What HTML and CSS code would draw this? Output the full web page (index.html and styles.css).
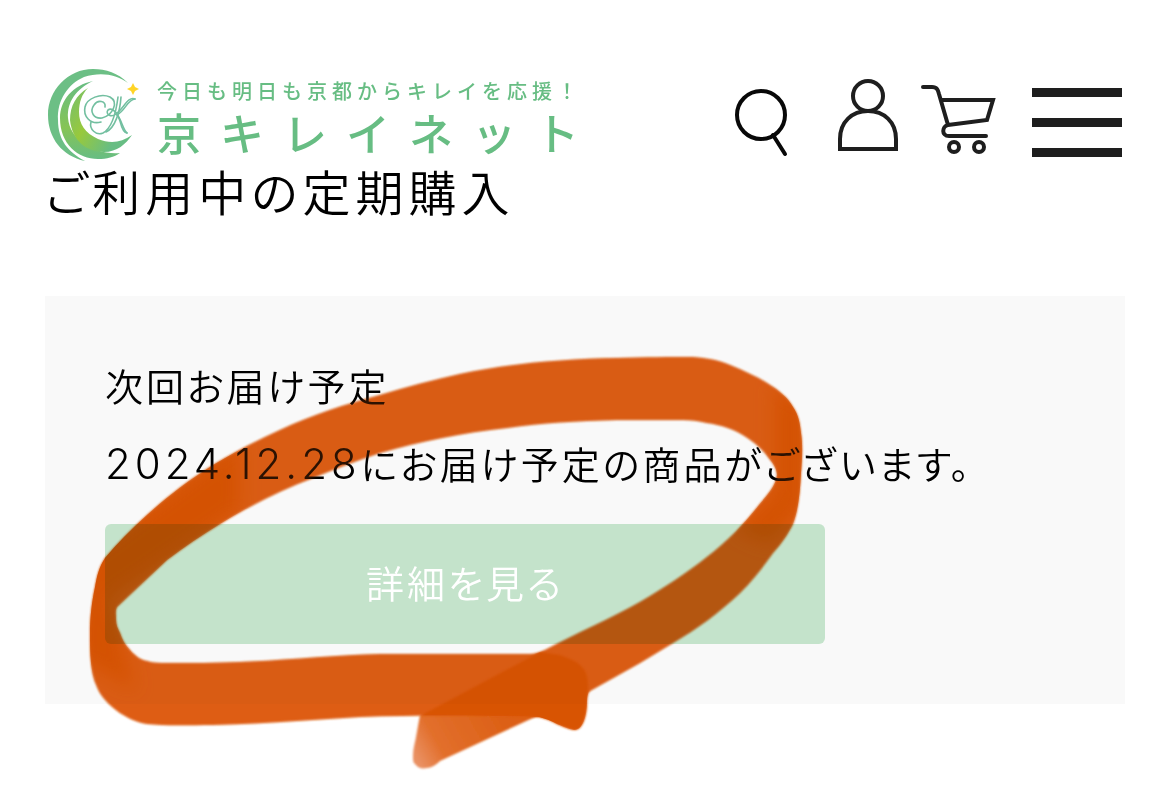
FILE: index.html
```html
<!DOCTYPE html>
<html lang="ja">
<head>
    <meta charset="UTF-8">
    <meta name="viewport" content="width=device-width, initial-scale=1.0">
    <title>ご利用中の定期購入</title>
    <link rel="stylesheet" href="styles.css">
</head>
<body>
    <header class="header">
        <a href="#" class="logo">
            <svg class="logo-mark" viewBox="0 0 92 94" aria-hidden="true">
                <defs>
                    <linearGradient id="leaf" x1="0" y1="0.2" x2="1" y2="0.8">
                        <stop offset="0" stop-color="#7cc165"/>
                        <stop offset="0.35" stop-color="#98c93c"/>
                        <stop offset="0.8" stop-color="#67bd83"/>
                    </linearGradient>
                    <linearGradient id="leaf-mid" x1="0" y1="0" x2="0" y2="1">
                        <stop offset="0" stop-color="#67bd83"/>
                        <stop offset="0.6" stop-color="#86c455"/>
                        <stop offset="1" stop-color="#67bd83"/>
                    </linearGradient>
                </defs>
                <path fill="#6cbf85" d="M80 15C70 5 58 1 45 1C20 1 0 22 0 47C0 70 14 88 37 93C20 84 10 72 10 52C9 32 20 16 36 9C52 4 68 6 80 15Z"/>
                <path fill="url(#leaf-mid)" d="M45 13C25 17 12 32 12 50C12 76 30 91 50 91C59 91 66 89 72 85C46 87 22 72 20 50C19 34 28 21 45 13Z"/>
                <path fill="url(#leaf)" d="M40 20C28 27 22 38 22 52C24 72 38 84 56 84C69 84 78 76 84 67C73 75 62 76 50 71C37 65 31 56 31 44C31 34 34 26 40 20Z"/>
                <g fill="none" stroke="#72bfa0" stroke-width="1.6" stroke-linecap="round">
                    <path d="M53 54C42 57 35 48 37 39C39 30 53 25 62 29C71 34 65 47 54 50C46 51 41 44 46 37C50 31 58 33 57 39"/>
                    <path d="M70 29C68 45 64 60 55 65C48 68 41 61 43 54"/>
                    <path d="M73 29C72 44 67 60 58 64"/>
                    <path d="M87 31C80 28 76 40 68 46C63 50 57 46 60 42C64 39 70 45 72 53C74 61 76 65 79 65"/>
                    <path d="M87 31C80 31 77 43 69 47C73 50 75 62 79 65"/>
                </g>
                <path fill="#ffd426" d="M85 15L87 19L91 21L87 23L85 27L83 23L79 21L83 19Z"/>
            </svg>
            <span class="logo-text">
                <span class="logo-lead">今日も明日も京都からキレイを応援！</span>
                <span class="logo-name">京キレイネット</span>
            </span>
        </a>
        <nav class="tools">
            <a href="#" class="tool" aria-label="検索">
                <svg width="60" height="92" viewBox="0 0 60 92">
                    <circle cx="29" cy="47" r="24" stroke="#080808"/>
                    <path d="M41 67L53 86" stroke="#080808"/>
                </svg>
            </a>
            <a href="#" class="tool tool-user" aria-label="マイページ">
                <svg width="64" height="92" viewBox="0 0 64 92">
                    <circle cx="32" cy="28" r="15"/>
                    <path d="M4 81V71C4 54 16 43 32 43S60 54 60 71V81Z"/>
                </svg>
            </a>
            <a href="#" class="tool tool-cart" aria-label="カート">
                <svg width="80" height="92" viewBox="0 0 80 92">
                    <path d="M3 19H12C17 19 18 22 19 26L28 57M21 32H73L67 52L28 57C22 58 21 68 29 68H66"/>
                    <circle cx="34" cy="79" r="5"/>
                    <circle cx="59" cy="79" r="5"/>
                </svg>
            </a>
            <button type="button" class="menu" aria-label="メニュー">
                <span class="bar"></span>
                <span class="bar"></span>
                <span class="bar"></span>
            </button>
        </nav>
    </header>

    <main class="main">
        <h1 class="title">ご利用中の定期購入</h1>

        <section class="card">
            <h2 class="card-text">次回お届け予定</h2>
            <p class="card-text"><span class="date">2024.12.28</span>にお届け予定の商品がございます。</p>
            <button type="button" class="detail">詳細を見る</button>

            <!-- marker circle: ink multiplied over the card, then a thin opaque coat -->
            <svg class="marker marker-ink" viewBox="85 350 725 425" aria-hidden="true">
                <defs>
                    <filter id="soft" x="-5%" y="-5%" width="110%" height="110%">
                        <feGaussianBlur stdDeviation="1.3"/>
                    </filter>
                    <filter id="softer" x="-20%" y="-20%" width="140%" height="140%">
                        <feGaussianBlur stdDeviation="9"/>
                    </filter>
                    <linearGradient id="tail" gradientUnits="userSpaceOnUse" x1="412" y1="750" x2="500" y2="700">
                        <stop offset="0" stop-color="#e99062"/>
                        <stop offset="0.25" stop-color="#e26f2c"/>
                        <stop offset="1" stop-color="#dc5f14"/>
                    </linearGradient>
                    <path id="ring" fill-rule="evenodd" d="M617 358C645 357 670 357 693 357C707 358 718 360 730 365C744 371 756 376 767 383C780 391 788 398 793 407C799 416 800 424 801 433C803 446 802 460 801 473C800 490 799 508 793 524C788 534 782 543 773 553C763 567 753 580 740 593C720 612 697 629 673 643L640 663L590 691C588 692 587 697 587 703C587 715 583 731 574 730C567 729 559 725 553 722C547 719 541 717 535 717C480 715 415 715 360 717C310 720 262 724 213 725C190 725 165 726 147 724C136 722 128 718 120 713C109 705 101 697 97 687C93 679 92 671 91 663C90 653 90 643 90 633C90 616 92 601 95 587C97 576 99 567 105 558C117 544 131 529 147 515C168 496 189 480 213 465C236 451 258 440 280 430C312 415 346 404 380 395C406 387 433 380 460 374C512 363 565 359 617 358ZM117 607C115 611 116 615 116 620C116 625 118 629 120 633C122 639 125 645 130 650C135 656 141 660 147 661C153 663 160 663 167 663C192 663 216 663 240 662C290 660 335 655 380 654L460 654L530 654C535 654 540 652 545 650C577 633 610 619 640 602C664 588 687 573 707 557C728 541 744 524 759 505C767 495 776 486 777 475C777 468 772 462 768 457C763 450 755 443 749 439C735 429 721 425 707 423C699 421 691 420 683 420H617C575 421 542 423 507 428C462 433 421 441 380 453C356 461 334 469 313 478C281 490 249 506 220 524C202 535 184 547 167 560Z"/>
                    <path id="tip" d="M420 715L460 695L545 652L590 690L535 717L440 761C436 765 431 768 427 768C422 769 418 768 416 765C413 763 413 760 413 757C413 748 415 743 416 737Z"/>
                    <clipPath id="ring-clip">
                        <use href="#ring" clip-rule="evenodd"/>
                    </clipPath>
                </defs>
                <use href="#tip" fill="url(#tail)" filter="url(#soft)"/>
                <use href="#ring" fill="#df5f14" filter="url(#soft)"/>
                <g clip-path="url(#ring-clip)">
                    <path d="M775 385L805 405V505L770 545L735 530L775 490V440Z" fill="#d85200" filter="url(#softer)"/>
                    <path d="M240 440L80 560V660L135 690L110 600L240 510Z" fill="#d85200" filter="url(#softer)"/>
                    <path d="M420 716L540 652L560 655C583 663 589 670 588 690C587 715 583 731 574 730L535 717Z" fill="#d85200" filter="url(#soft)"/>
                </g>
            </svg>
            <svg class="marker marker-coat" viewBox="85 350 725 425" aria-hidden="true">
                <g fill="#dc5a10" filter="url(#soft)">
                    <use href="#ring"/>
                </g>
            </svg>
        </section>
    </main>
</body>
</html>
```

FILE: styles.css
```css
* {
    box-sizing: border-box;
}
body {
    min-height: 100vh;
    margin: 0;
    padding: 68px 45px 45px;
    background-color: #fff;
    color: #000;
    font-family: "Noto Sans CJK JP", sans-serif;
    font-weight: 350;
    font-feature-settings: "palt";
}
.header {
    display: flex;
    justify-content: space-between;
    align-items: flex-start;
    height: 92px;
    padding: 0 3px;
}
.logo {
    display: flex;
    gap: 17px;
    color: #67bd83;
    text-decoration: none;
    white-space: nowrap;
    font-feature-settings: normal;
}
.logo-mark {
    width: 92px;
    height: 94px;
}
.logo-text {
    display: flex;
    flex-direction: column;
    padding-top: 9px;
}
.logo-lead {
    font-size: 20px;
    line-height: 28px;
    letter-spacing: 5px;
    font-weight: 500;
}
.logo-name {
    font-size: 44px;
    line-height: 54px;
    letter-spacing: 19px;
    font-weight: 500;
}
.tools {
    display: flex;
}
.tool {
    display: block;
    height: 92px;
}
.tool svg {
    display: block;
    fill: none;
    stroke: #1e1e1e;
    stroke-width: 4;
    stroke-linecap: round;
}
.tool-user {
    margin-left: 44px;
}
.tool-cart {
    margin: 0 32px 0 20px;
}
.menu {
    display: flex;
    flex-direction: column;
    gap: 21px;
    width: 90px;
    height: 92px;
    padding: 20px 0 0;
    border: none;
    background-color: transparent;
    cursor: pointer;
}
.bar {
    width: 100%;
    height: 9px;
    background-color: #1e1e1e;
}
.title {
    margin: 0 0 76px;
    font-size: 48px;
    line-height: 60px;
    letter-spacing: 5px;
    font-weight: 350;
}
.card {
    position: relative;
    padding: 58px 60px 60px;
    background-color: #f9f9f9;
}
.card-text {
    margin: 0 0 16px;
    font-size: 38px;
    line-height: 62px;
    letter-spacing: 3px;
    font-weight: 350;
}
.date {
    font-family: Inter, "Noto Sans CJK JP", sans-serif;
    font-size: 42px;
    line-height: 42px;
    letter-spacing: 4px;
    font-weight: 300;
}
.detail {
    display: block;
    width: 75%;
    height: 120px;
    margin-top: 30px;
    padding: 0 0 6px;
    border: none;
    border-radius: 6px;
    background-color: #c4e3cb;
    color: #fff;
    font: inherit;
    font-size: 38px;
    letter-spacing: 3px;
    cursor: pointer;
}
.marker {
    position: absolute;
    top: 54px;
    left: 40px;
    width: 725px;
    height: 425px;
    pointer-events: none;
}
.marker-ink {
    mix-blend-mode: multiply;
}
.marker-coat {
    opacity: 0.2;
}
```
